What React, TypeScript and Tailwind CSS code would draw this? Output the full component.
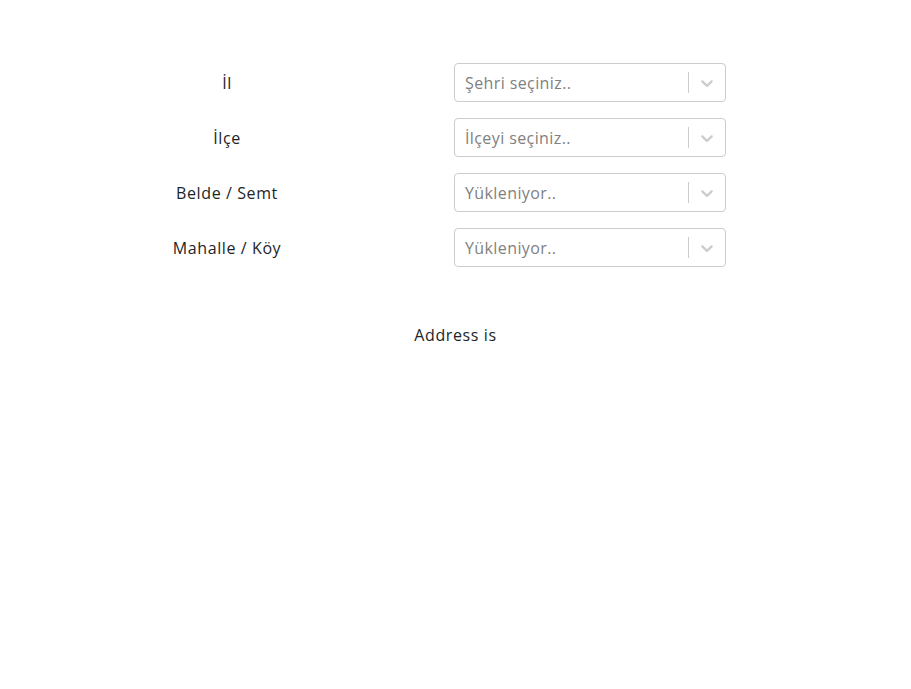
import React from "react"

type Field = {
  label: string
  placeholder: string
}

const fields: Field[] = [
  { label: "İl", placeholder: "Şehri seçiniz.." },
  { label: "İlçe", placeholder: "İlçeyi seçiniz.." },
  { label: "Belde / Semt", placeholder: "Yükleniyor.." },
  { label: "Mahalle / Köy", placeholder: "Yükleniyor.." },
]

const Chevron = () => (
  <svg height="20" width="20" viewBox="0 0 20 20" aria-hidden="true" className="fill-[#cccccc]">
    <path d="M4.516 7.548c0.436-0.446 1.043-0.481 1.576 0l3.908 3.747 3.908-3.747c0.533-0.481 1.141-0.446 1.574 0 0.436 0.445 0.408 1.197 0 1.615-0.406 0.418-4.695 4.502-4.695 4.502-0.217 0.223-0.502 0.335-0.787 0.335s-0.57-0.112-0.789-0.335c0 0-4.287-4.084-4.695-4.502s-0.436-1.17 0-1.615z" />
  </svg>
)

const FakeSelect = ({ placeholder }: { placeholder: string }) => (
  <div className="flex h-[39px] w-[272px] items-center rounded border border-[#cccccc] bg-white">
    <div className="flex-1 px-[10px] tracking-[0.4px] text-[#808080]">{placeholder}</div>
    <div className="flex items-center self-stretch">
      <span className="my-2 w-px self-stretch bg-[#cccccc]" />
      <div className="p-2">
        <Chevron />
      </div>
    </div>
  </div>
)

export default function App() {
  return (
    <div
      className="min-h-screen bg-white pt-[63px] text-[16px] tracking-[0.6px] text-[#212529]"
      style={{ fontFamily: '"Open Sans", "Noto Sans", sans-serif' }}
    >
      <div className="flex flex-col gap-[16px]">
        {fields.map((f) => (
          <div key={f.label} className="grid grid-cols-[454px_1fr] items-center">
            <div className="text-center">{f.label}</div>
            <div>
              <FakeSelect placeholder={f.placeholder} />
            </div>
          </div>
        ))}
      </div>
      <div className="mt-[56px] text-center">Address is</div>
    </div>
  )
}
